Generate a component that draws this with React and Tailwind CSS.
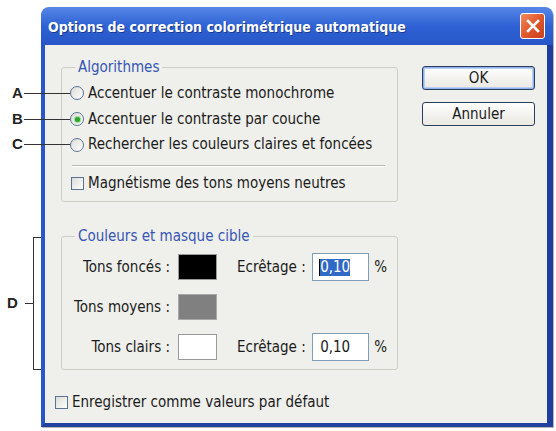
function Radio({ checked }) {
  return (
    <span className="relative flex items-center justify-center w-[14px] h-[14px] rounded-full border border-[#5b7393] bg-gradient-to-br from-[#dcdcd6] to-[#ffffff] shrink-0">
      {checked && <span className="w-[5px] h-[5px] rounded-full bg-[#2ea52e] shadow-[0_0_1px_1px_#8fd98f]" />}
    </span>
  );
}

function Check() {
  return (
    <span className="w-[13px] h-[13px] border border-[#5b7393] bg-gradient-to-br from-[#dcdcd6] to-[#ffffff] shrink-0" />
  );
}

function Btn({ children, def }) {
  return (
    <div
      className={
        "h-[24px] w-[113px] rounded-[3px] border border-[#2b3f5c] bg-gradient-to-b from-[#ffffff] to-[#e9e8e1] flex items-center justify-center text-[15px] " +
        (def ? "shadow-[inset_0_0_0_1px_#8fb2ee,inset_0_0_0_2px_#b8d0f6]" : "")
      }
    >
      {children}
    </div>
  );
}

function Legend({ children, ml }) {
  return (
    <legend className={ml + " px-[3px] h-[16px] leading-[16px] text-[#3656b4]"}>{children}</legend>
  );
}

export default function App() {
  return (
    <div className="relative w-[556px] h-[431px] bg-white overflow-hidden font-['DejaVu_Sans_Condensed','DejaVu_Sans',sans-serif] text-[15px] text-[#1b1b1b]">
      <div className="pl-[41px] pt-[7px]">
        <div className="w-[512px] h-[420px] flex flex-col rounded-t-[8px] overflow-hidden shadow-[1px_1px_0_#b8b8b8]">
          {/* title bar */}
          <div className="h-[38px] shrink-0 flex items-center pl-[7px] pr-[8px] bg-gradient-to-b from-[#5686e6] via-[#2f62d4] to-[#2756c8]">
            <span className="text-white font-bold text-[14px] pt-[2px] [text-shadow:1px_1px_0_#1a3a8a] font-['DejaVu_Sans_Condensed','DejaVu_Sans',sans-serif]">
              Options de correction colorimétrique automatique
            </span>
            <div className="ml-auto w-[25px] h-[26px] rounded-[3px] border border-white bg-gradient-to-br from-[#f08a5c] via-[#e0582c] to-[#c8401c] flex items-center justify-center">
              <svg width="14" height="14" viewBox="0 0 14 14">
                <path d="M2 2 L12 12 M12 2 L2 12" stroke="white" strokeWidth="2.6" strokeLinecap="square" />
              </svg>
            </div>
          </div>
          {/* body */}
          <div className="flex-1 bg-[#efefeb] border-l-[4px] border-l-[#2a57c8] border-r-[6px] border-r-[#1f3d9e] border-b-[4px] border-b-[#22409e] flex flex-col">
            <div className="flex pl-[16px]">
              <div className="w-[337px] flex flex-col pt-[14px]">
                <fieldset className="border border-[#cfcfc6] rounded-[3px] pl-[8px] pr-[8px]">
                  <Legend ml="ml-[5px]">Algorithmes</Legend>
                  <div className="pt-[5px] flex flex-col">
                    <div className="h-[26px] flex items-center gap-[4px]">
                      <Radio />
                      <span>Accentuer le contraste monochrome</span>
                    </div>
                    <div className="h-[26px] flex items-center gap-[4px]">
                      <Radio checked />
                      <span>Accentuer le contraste par couche</span>
                    </div>
                    <div className="h-[25px] flex items-center gap-[4px]">
                      <Radio />
                      <span>Rechercher les couleurs claires et foncées</span>
                    </div>
                    <div className="mt-[8px] mr-[4px] ml-[2px] h-[2px] border-t border-t-[#b8b8b0] border-b border-b-white" />
                    <div className="mt-[4px] h-[24px] flex items-center gap-[4px] ml-[1px]">
                      <Check />
                      <span>Magnétisme des tons moyens neutres</span>
                    </div>
                    <div className="h-[6px]" />
                  </div>
                </fieldset>
                <fieldset className="mt-[26px] border border-[#cfcfc6] rounded-[3px] pl-[10px] pr-[8px]">
                  <Legend ml="ml-[3px]">Couleurs et masque cible</Legend>
                  <div className="pt-[9px] pb-[8px] flex flex-col gap-[12px]">
                    <div className="h-[28px] flex items-center">
                      <span className="w-[98px] text-right whitespace-nowrap">Tons foncés :</span>
                      <span className="ml-[8px] w-[39px] h-[26px] bg-black border border-[#9a9a9a]" />
                      <span className="ml-[20px]">Ecrêtage :</span>
                      <div className="ml-auto w-[57px] h-[28px] border border-[#7f9db9] bg-white flex items-center pl-[6px]">
                        <span className="border-l border-l-black bg-[#3169c6] text-white leading-[17px]">0,10</span>
                      </div>
                      <span className="ml-[5px] mr-[2px]">%</span>
                    </div>
                    <div className="h-[28px] flex items-center">
                      <span className="w-[98px] text-right whitespace-nowrap">Tons moyens :</span>
                      <span className="ml-[8px] w-[39px] h-[26px] bg-[#808080] border border-[#a8a8a8]" />
                    </div>
                    <div className="h-[28px] flex items-center">
                      <span className="w-[98px] text-right whitespace-nowrap">Tons clairs :</span>
                      <span className="ml-[8px] w-[39px] h-[26px] bg-white border border-[#9a9a9a]" />
                      <span className="ml-[20px]">Ecrêtage :</span>
                      <div className="ml-auto w-[57px] h-[28px] border border-[#7f9db9] bg-white flex items-center pl-[7px]">
                        <span className="leading-[17px]">0,10</span>
                      </div>
                      <span className="ml-[5px] mr-[2px]">%</span>
                    </div>
                  </div>
                </fieldset>
              </div>
              <div className="ml-[24px] pt-[21px] flex flex-col gap-[12px]">
                <Btn def>OK</Btn>
                <Btn>Annuler</Btn>
              </div>
            </div>
            <div className="mt-[25px] ml-[10px] h-[14px] flex items-center gap-[4px]">
              <Check />
              <span>Enregistrer comme valeurs par défaut</span>
            </div>
          </div>
        </div>
      </div>

      {/* callout annotations */}
      <div className="absolute left-[12px] top-[84px] font-['Liberation_Sans',sans-serif] font-bold text-[15px] leading-[18px] text-[#222]">A</div>
      <div className="absolute left-[24px] top-[93px] w-[46px] h-px bg-[#333]" />
      <div className="absolute left-[12px] top-[110px] font-['Liberation_Sans',sans-serif] font-bold text-[15px] leading-[18px] text-[#222]">B</div>
      <div className="absolute left-[24px] top-[119px] w-[46px] h-px bg-[#333]" />
      <div className="absolute left-[12px] top-[135px] font-['Liberation_Sans',sans-serif] font-bold text-[15px] leading-[18px] text-[#222]">C</div>
      <div className="absolute left-[24px] top-[144px] w-[46px] h-px bg-[#333]" />

      <div className="absolute left-[7px] top-[294px] font-['Liberation_Sans',sans-serif] font-bold text-[15px] leading-[18px] text-[#222]">D</div>
      <div className="absolute left-[25px] top-[303px] w-[8px] h-px bg-[#333]" />
      <div className="absolute left-[33px] top-[237px] w-[8px] h-[133px] border-l border-t border-b border-[#333]" />
    </div>
  );
}
